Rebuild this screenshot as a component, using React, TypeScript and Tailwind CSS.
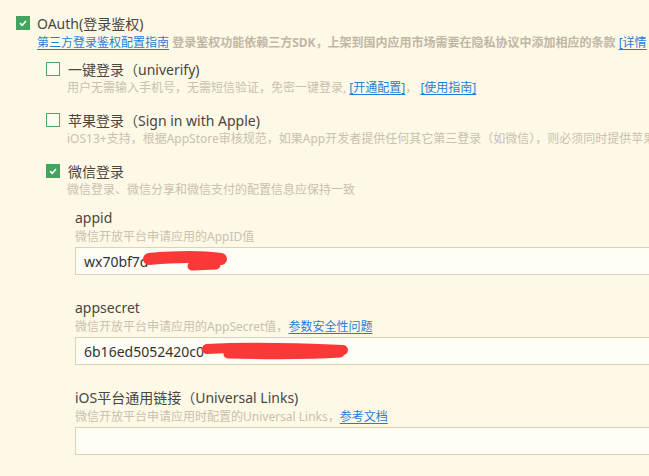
import React from "react";

function Box({ checked }: { checked?: boolean }) {
  if (checked) {
    return (
      <span className="flex h-[14px] w-[14px] shrink-0 items-center justify-center bg-[#43a35f]">
        <svg width="10" height="10" viewBox="0 0 10 10" aria-hidden>
          <path d="M2 5.2 L4.2 7.3 L8 3" fill="none" stroke="#fff" strokeWidth="1.6" />
        </svg>
      </span>
    );
  }
  return <span className="h-[14px] w-[14px] shrink-0 border border-[#4da866] bg-[#fffcf0]" />;
}

function Link({ children }: { children: React.ReactNode }) {
  return <span className="text-[#1e7fd8] underline underline-offset-2">{children}</span>;
}

function Option({
  checked,
  title,
  desc,
}: {
  checked?: boolean;
  title: string;
  desc: React.ReactNode;
}) {
  return (
    <div className="mb-[13px]">
      <div className="flex h-[20px] items-center gap-[8px]">
        <Box checked={checked} />
        <span className="text-[14px] text-[#4a4640]">{title}</span>
      </div>
      <div className="h-[18px] pl-[21px] text-[12px] leading-[18px] text-[#c9c1ae]">{desc}</div>
    </div>
  );
}

function Field({
  label,
  desc,
  value,
  redact,
}: {
  label: string;
  desc: React.ReactNode;
  value?: string;
  redact?: React.ReactNode;
}) {
  return (
    <div className="mb-[23px]">
      <div className="h-[20px] text-[14px] leading-[20px] text-[#4a4640]">{label}</div>
      <div className="h-[18px] text-[12px] leading-[18px] text-[#c9c1ae]">{desc}</div>
      <div className="relative mt-[1px] flex h-[28px] w-[640px] items-center border border-[#dcd3b3] bg-[#fffdf5] px-[8px] text-[14px] text-[#333]">
        {value}
        {redact}
      </div>
    </div>
  );
}

export default function App() {
  return (
    <div
      className="h-[476px] w-[649px] overflow-hidden whitespace-nowrap bg-[#fef8e6] pl-[16px] pt-[13px]"
      style={{ fontFamily: '"Noto Sans", "Noto Sans CJK SC", sans-serif' }}
    >
      <div className="flex h-[20px] items-center gap-[7px]">
        <Box checked />
        <span className="text-[14px] text-[#4a4640]">OAuth(登录鉴权)</span>
      </div>
      <div className="h-[20px] pl-[21px] text-[12px] leading-[20px]">
        <Link>第三方登录鉴权配置指南</Link>{" "}
        <span className="font-bold text-[#bfb7a5]">
          登录鉴权功能依赖三方SDK，上架到国内应用市场需要在隐私协议中添加相应的条款
        </span>{" "}
        <Link>[详情</Link>
      </div>

      <div className="mt-[6px] pl-[30px]">
        <Option
          title="一键登录（univerify)"
          desc={
            <>
              用户无需输入手机号，无需短信验证，免密一键登录, <Link>[开通配置]</Link>，{" "}
              <Link>[使用指南]</Link>
            </>
          }
        />
        <Option
          title="苹果登录（Sign in with Apple)"
          desc="iOS13+支持，根据AppStore审核规范，如果App开发者提供任何其它第三登录（如微信），则必须同时提供苹果登录"
        />
        <Option checked title="微信登录" desc="微信登录、微信分享和微信支付的配置信息应保持一致" />

        <div className="-mt-[4px] pl-[29px]">
          <Field
            label="appid"
            desc="微信开放平台申请应用的AppID值"
            value="wx70bf7d"
            redact={
              <svg className="absolute left-[66px] top-[3px]" width="86" height="22" viewBox="0 0 86 22" aria-hidden>
                <path d="M7 8 C 30 6, 58 5, 79 8" fill="none" stroke="#fb3838" strokeWidth="12" strokeLinecap="round" />
                <path d="M50 15 L 74 14" fill="none" stroke="#fb3838" strokeWidth="9" strokeLinecap="round" />
              </svg>
            }
          />
          <Field
            label="appsecret"
            desc={
              <>
                微信开放平台申请应用的AppSecret值，<Link>参数安全性问题</Link>
              </>
            }
            value="6b16ed5052420c0"
            redact={
              <svg className="absolute left-[124px] top-[4px]" width="150" height="20" viewBox="0 0 150 20" aria-hidden>
                <path d="M7 7 C 40 5, 100 6, 143 8" fill="none" stroke="#fb3838" strokeWidth="10" strokeLinecap="round" />
                <path d="M28 12 C 70 13, 110 13, 140 11" fill="none" stroke="#fb3838" strokeWidth="9" strokeLinecap="round" />
              </svg>
            }
          />
          <Field
            label="iOS平台通用链接（Universal Links)"
            desc={
              <>
                微信开放平台申请应用时配置的Universal Links，<Link>参考文档</Link>
              </>
            }
          />
        </div>
      </div>
    </div>
  );
}
